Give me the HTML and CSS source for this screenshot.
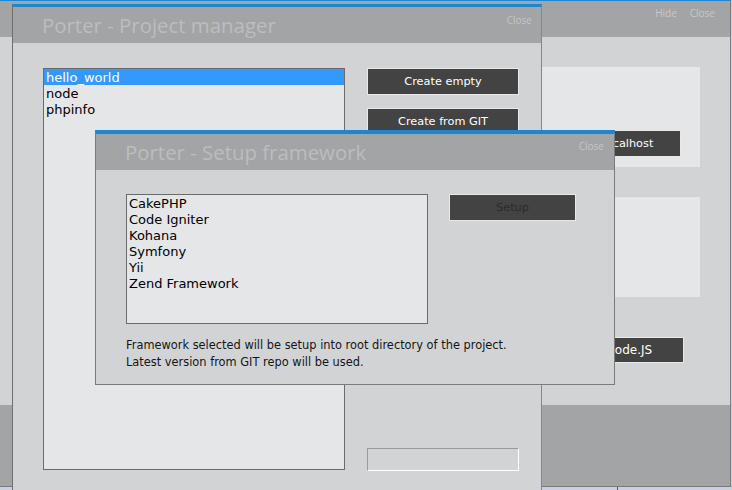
FILE: index.html
```html
<!DOCTYPE html>
<html lang="en">
<head>
    <meta charset="UTF-8">
    <meta name="viewport" content="width=device-width, initial-scale=1.0">
    <title>Porter</title>
    <link rel="stylesheet" href="styles.css">
</head>
<body>
    <div class="main-window">
        <div class="main-bar">
            <span class="bar-link">Hide</span>
            <span class="bar-link">Close</span>
        </div>
        <div class="main-body">
            <div class="panel">
                <button class="btn btn-side">localhost</button>
            </div>
            <div class="panel"></div>
            <button class="btn btn-side btn-node">Node.JS</button>
        </div>
        <div class="main-footer"></div>
    </div>

    <div class="taskbar">
        <span class="task"></span>
    </div>

    <!-- project manager dialog -->
    <div class="window pm-window">
        <div class="title-bar">
            <h1>Porter - Project manager</h1>
            <span class="close">Close</span>
        </div>
        <div class="pm-body">
            <ul class="listbox pm-list">
                <li class="selected">hello_world</li>
                <li>node</li>
                <li>phpinfo</li>
            </ul>
            <div class="pm-actions">
                <button class="btn">Create empty</button>
                <button class="btn">Create from GIT</button>
                <input class="path-input" type="text">
            </div>
        </div>
    </div>

    <!-- setup framework dialog -->
    <div class="window sf-window">
        <div class="title-bar">
            <h1>Porter - Setup framework</h1>
            <span class="close">Close</span>
        </div>
        <div class="sf-body">
            <div class="sf-row">
                <ul class="listbox sf-list">
                    <li>CakePHP</li>
                    <li>Code Igniter</li>
                    <li>Kohana</li>
                    <li>Symfony</li>
                    <li>Yii</li>
                    <li>Zend Framework</li>
                </ul>
                <button class="btn btn-setup">Setup</button>
            </div>
            <p class="note">Framework selected will be setup into root directory of the project.<br>Latest version from GIT repo will be used.</p>
        </div>
    </div>
</body>
</html>
```

FILE: styles.css
```css
:root {
    --blue: #1b87d3;
    --bar-gray: #a3a4a6;
    --body-gray: #d2d3d5;
    --list-bg: #e5e6e8;
    --btn-dark: #434343;
}

* {
    margin: 0;
    padding: 0;
    box-sizing: border-box;
}

body {
    background: #c7d1e1;
    overflow: hidden;
    font-family: "DejaVu Sans", Verdana, sans-serif;
}

button,
input {
    font: inherit;
}

/* background app window */
.main-window {
    width: 731px;
    height: 487px;
    border-top: 1px solid var(--blue);
    border-right: 1px solid #7a7a7a;
    border-bottom: 1px solid #7a7a7a;
}

.main-bar {
    height: 36px;
    background: var(--bar-gray);
    display: flex;
    justify-content: flex-end;
    align-items: flex-start;
    gap: 13px;
    padding: 5px 15px 0 0;
    font-family: "Open Sans", sans-serif;
    font-size: 10px;
    line-height: 14px;
    color: #c8c8c8;
}

.main-body {
    height: 368px;
    background: var(--body-gray);
    display: flex;
    flex-direction: column;
    align-items: flex-end;
    padding: 30px 30px 0 0;
}

.panel {
    width: 260px;
    height: 100px;
    background: var(--list-bg);
    display: flex;
    justify-content: flex-end;
    align-items: flex-end;
    padding: 0 19px 10px 0;
}

.panel + .panel {
    margin-top: 30px;
}

.main-footer {
    height: 81px;
    background: var(--bar-gray);
}

.taskbar {
    height: 3px;
    display: flex;
}

.task {
    width: 618px;
    border-right: 1px solid #5a5a5a;
}

/* buttons */
.btn {
    background: var(--btn-dark);
    color: #fff;
    border: 1px solid #e8e8e8;
    font-size: 11.3px;
    height: 27px;
    cursor: pointer;
}

.btn-side {
    width: 106px;
}

.btn-node {
    width: 110px;
    height: 26px;
    margin-top: 40px;
    margin-right: 16px;
    font-size: 12px;
}

/* dialogs */
.window {
    position: absolute;
    background: var(--body-gray);
}

.title-bar {
    height: 36px;
    background: var(--bar-gray);
    display: flex;
    align-items: flex-start;
}

.title-bar h1 {
    font-family: "Open Sans", sans-serif;
    font-weight: normal;
    font-size: 20.4px;
    line-height: 36px;
    color: #bcbdbe;
    padding-left: 29px;
}

.close {
    margin-left: auto;
    margin-right: 9px;
    padding-top: 6px;
    font-family: "Open Sans", sans-serif;
    font-size: 10px;
    line-height: 14px;
    color: #c4c4c4;
}

.listbox {
    list-style: none;
    background: var(--list-bg);
    border: 1px solid #6b6b6b;
    font-size: 13px;
    line-height: 16px;
    color: #000;
}

.listbox li {
    height: 16px;
    padding: 1px 0 0 2px;
}

.listbox li.selected {
    background: #3399ff;
    color: #fff;
}

.pm-window {
    left: 12px;
    top: 4px;
    width: 530px;
    height: 486px;
    border-top: 3px solid var(--blue);
    border-left: 1px solid #6e6e6e;
    border-right: 1px solid #878787;
}

.pm-body {
    display: flex;
    gap: 22px;
    padding: 25px 22px 0 30px;
}

.pm-list {
    width: 302px;
    height: 402px;
}

.pm-actions {
    width: 152px;
    height: 403px;
    display: flex;
    flex-direction: column;
}

.pm-actions .btn + .btn {
    margin-top: 13px;
}

.path-input {
    margin-top: auto;
    height: 23px;
    background: transparent;
    border: 1px solid;
    border-color: #9a9a9a #fff #fff #9a9a9a;
}

.sf-window {
    left: 95px;
    top: 130px;
    width: 520px;
    height: 255px;
    border-top: 4px solid var(--blue);
    border-left: 1px solid #7b7b7b;
    border-right: 1px solid #7b7b7b;
    border-bottom: 1px solid #7b7b7b;
}

.sf-window .close {
    margin-right: 10px;
    padding-top: 5px;
}

.sf-body {
    padding: 24px 0 0 30px;
}

.sf-row {
    display: flex;
    align-items: flex-start;
    gap: 21px;
}

.sf-list {
    width: 302px;
    height: 130px;
}

.btn-setup {
    width: 127px;
    color: #2b2b2b;
}

.note {
    margin-top: 13px;
    font-size: 11.4px;
    line-height: 17px;
    color: #151515;
}
```
